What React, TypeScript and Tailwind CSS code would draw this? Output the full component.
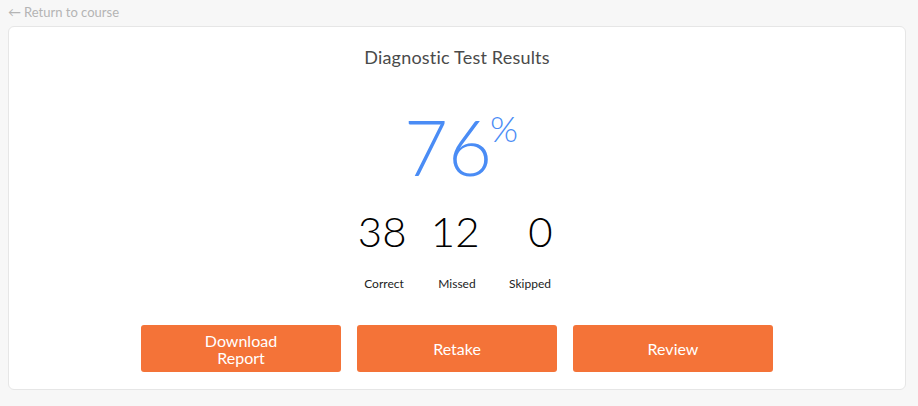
export default function App() {
  const stats = [
    { value: "38", label: "Correct" },
    { value: "12", label: "Missed" },
    { value: "0", label: "Skipped" },
  ];

  return (
    <div className="min-h-screen w-full bg-[#f7f7f7] px-2 pt-[3px] font-['Lato','Open_Sans',sans-serif]">
      <a className="flex h-[19px] items-center gap-[3px] text-[13px] text-[#b4b4b4]">
        <span className="text-[13px]">←</span>
        Return to course
      </a>

      <div className="mt-1 h-[364px] w-[898px] rounded-md border border-[#e6e6e6] bg-white pt-[17px]">
        <h1 className="text-center text-[18px] font-normal tracking-[0.2px] text-[#4a4a4a]">
          Diagnostic Test Results
        </h1>

        <div className="mt-[31px] flex justify-center pl-[8px]">
          <span className="text-[76px] leading-[90px] font-light text-[#4a8cf5]">76</span>
          <span className="-ml-[2px] mt-[6px] text-[36px] leading-[40px] font-light text-[#4a8cf5]">%</span>
        </div>

        <div className="mt-[15px] flex justify-center">
          {stats.map((s) => (
            <div key={s.label} className="flex w-[73px] flex-col">
              <div className="pr-[14px] text-right text-[42px] leading-[48px] font-light text-black">
                {s.value}
              </div>
              <div className="mt-[20px] text-center text-[12px] text-[#222]">{s.label}</div>
            </div>
          ))}
        </div>

        <div className="mt-[32px] flex justify-center gap-4">
          {["Download Report", "Retake", "Review"].map((t) => (
            <button
              key={t}
              className="flex h-[47px] w-[200px] items-center justify-center rounded-[3px] bg-[#f47338] px-14 text-[16px] leading-[17px] text-white"
            >
              {t}
            </button>
          ))}
        </div>
      </div>
    </div>
  );
}
